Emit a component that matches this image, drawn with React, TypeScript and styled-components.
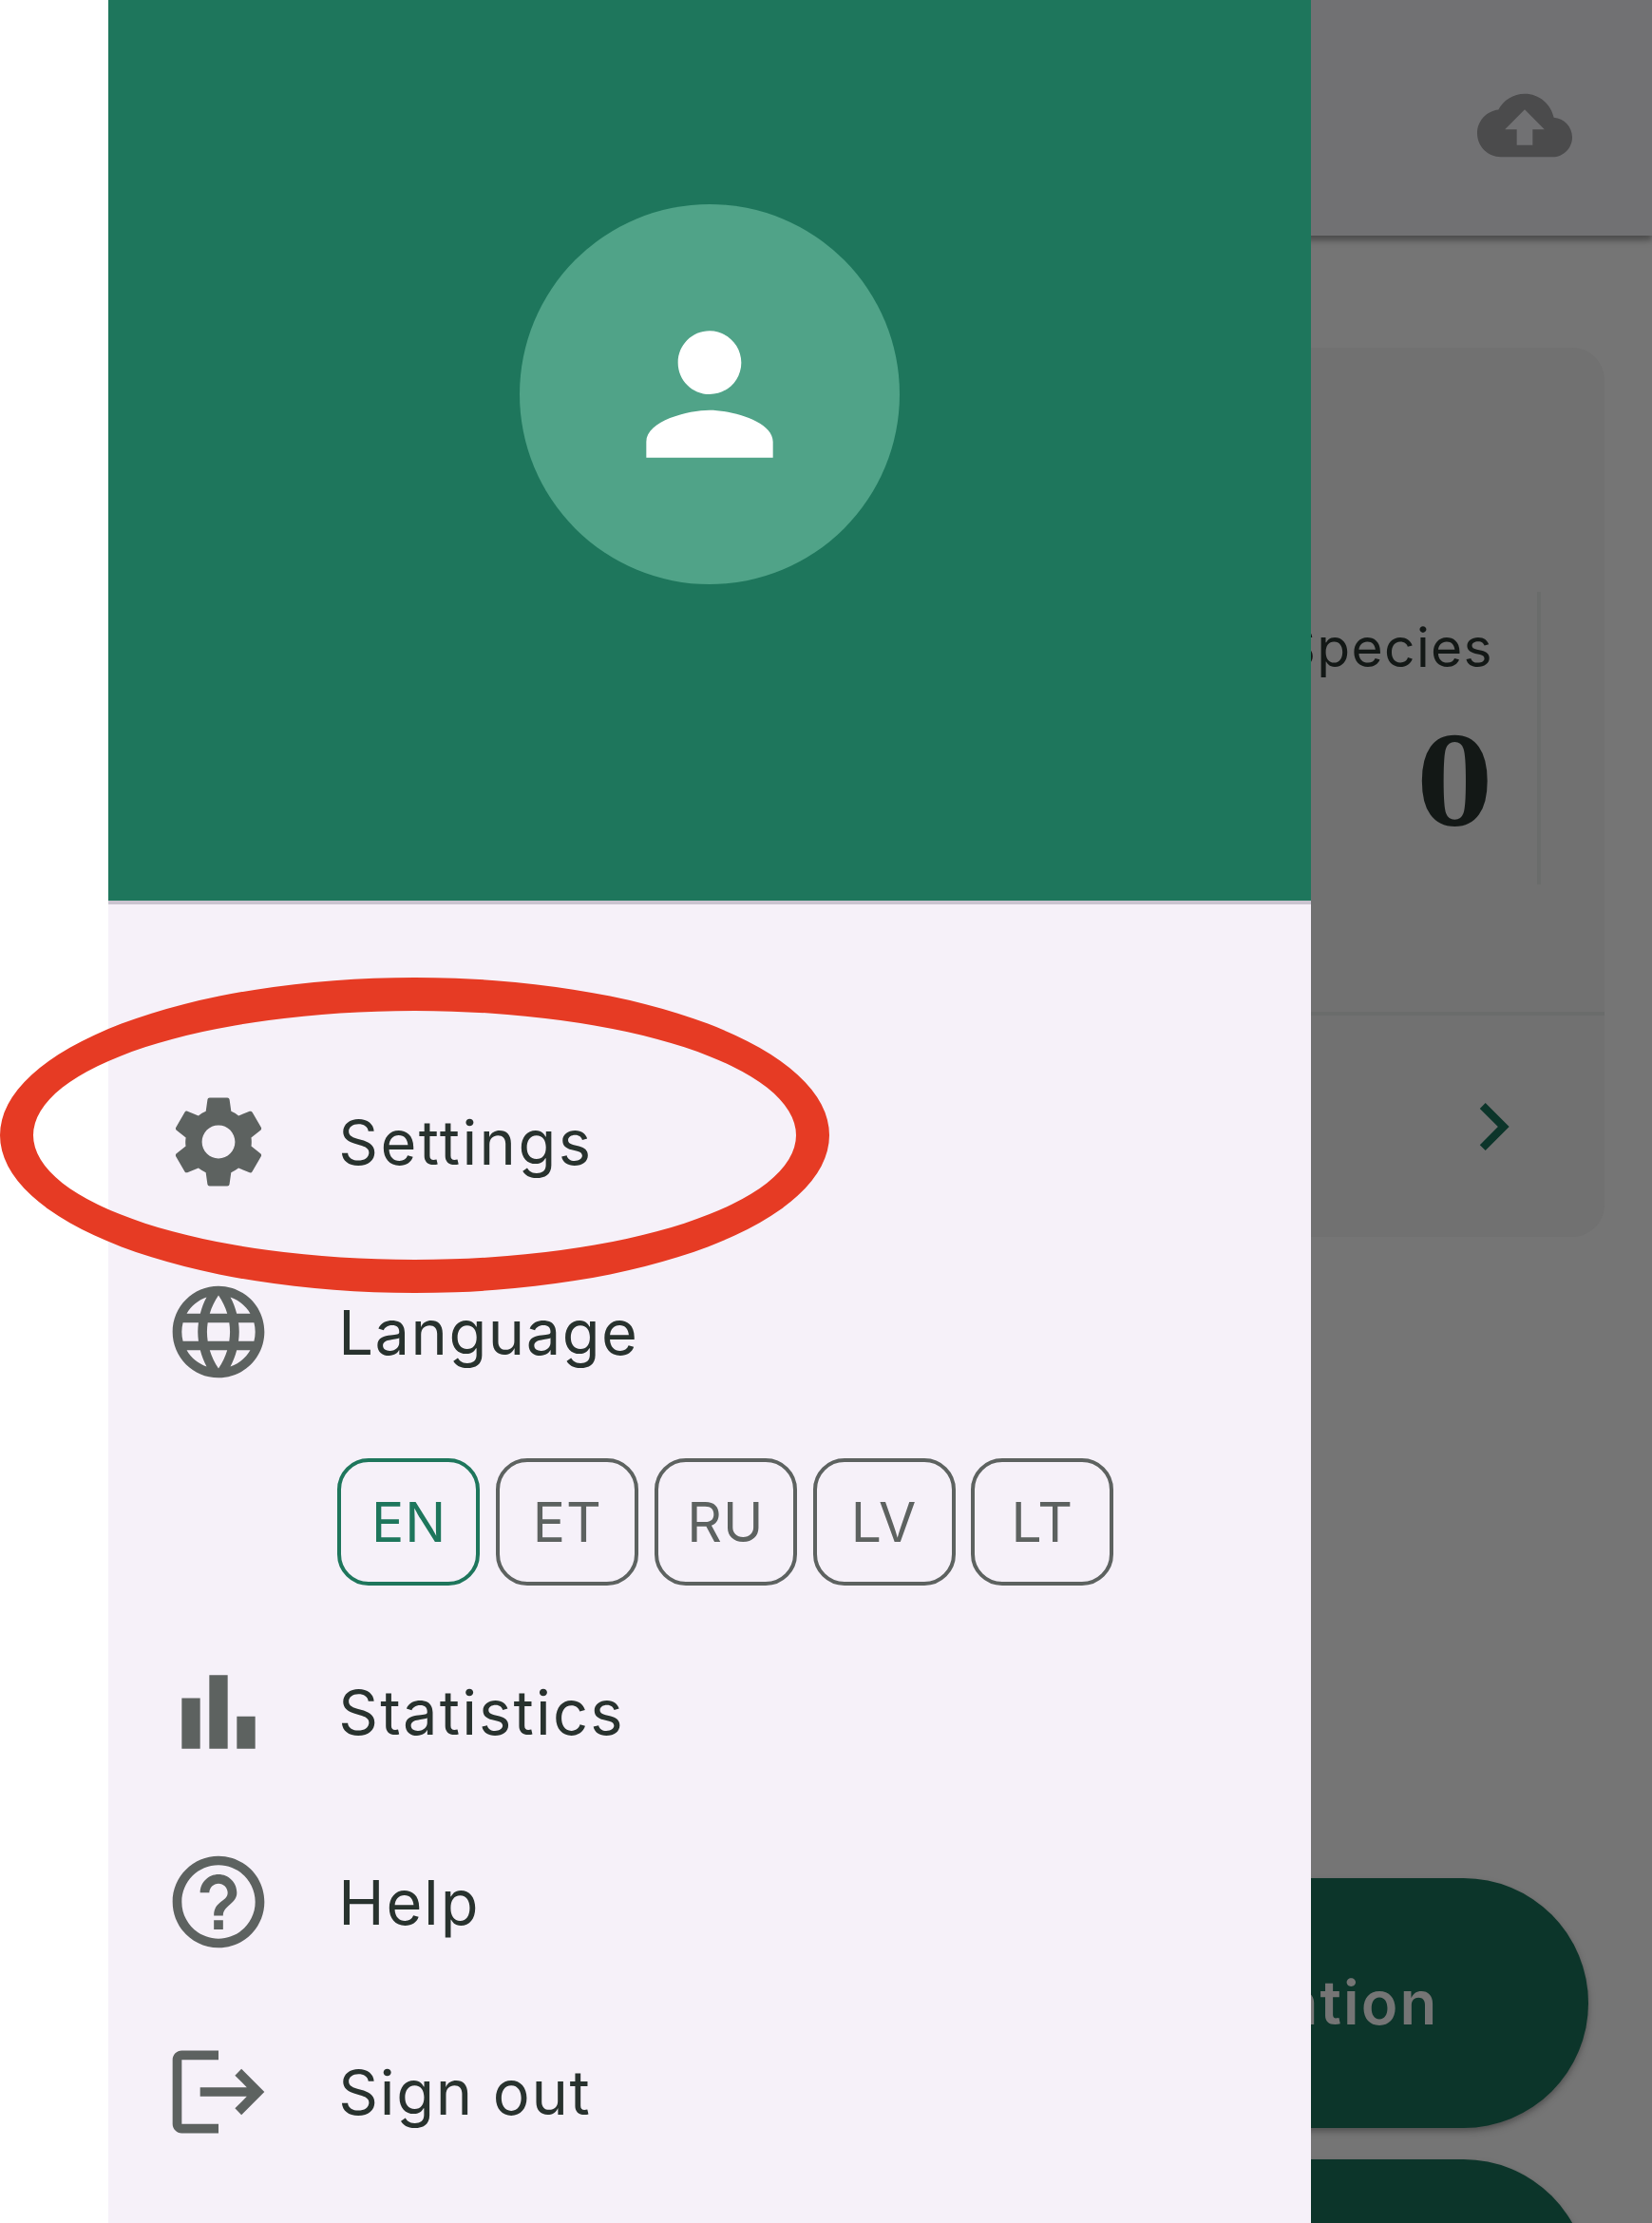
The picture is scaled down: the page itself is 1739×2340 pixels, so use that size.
import React from 'react';
import styled, { createGlobalStyle } from 'styled-components';

const Global = createGlobalStyle`
  * { box-sizing: border-box; }
  body { margin: 0; background: #fff; font-family: Inter, "Open Sans", sans-serif; }
`;

const Screen = styled.div`
  position: relative;
  display: flex;
  width: 1739px;
  height: 2340px;
  overflow: hidden;
  background: #ffffff;
`;

const Drawer = styled.aside`
  width: 1266px;
  margin-left: 114px;
  flex: none;
  display: flex;
  flex-direction: column;
  background: #f6f1f9;
`;

const Profile = styled.div`
  height: 952px;
  padding-top: 215px;
  display: flex;
  justify-content: center;
  align-items: flex-start;
  background: #1e765c;
  border-bottom: 4px solid #cac4d0;
`;

const Avatar = styled.div`
  width: 400px;
  height: 400px;
  border-radius: 50%;
  display: flex;
  align-items: center;
  justify-content: center;
  background: #50a388;
`;

const Menu = styled.nav`
  display: flex;
  flex-direction: column;
  padding: 150px 0 0 58.3px;
`;

const Item = styled.div`
  height: 200px;
  display: flex;
  align-items: center;
  gap: 68px;
  color: #5d6260;
`;

const Label = styled.span<{ $track?: number }>`
  padding-top: 2px;
  font-size: 65px;
  line-height: 80px;
  letter-spacing: ${(p) => p.$track ?? 2}px;
  color: #28322e;
  white-space: nowrap;
`;

const Chips = styled.div`
  height: 200px;
  padding-left: 183.2px;
  display: flex;
  align-items: center;
  gap: 16.7px;
`;

const Chip = styled.button<{ $active?: boolean }>`
  width: 150px;
  height: 134px;
  padding: 2px 0 0 0;
  border: 4px solid ${(p) => (p.$active ? '#1e765c' : '#5d6260')};
  border-radius: 33px;
  background: transparent;
  color: ${(p) => (p.$active ? '#1e765c' : '#5d6260')};
  font: 400 57px/70px Inter, sans-serif;
  letter-spacing: 1px;
`;

const Page = styled.main`
  width: 359px;
  flex: none;
  overflow: hidden;
  display: flex;
  flex-direction: column;
  background: #757575;
`;

const TopBar = styled.header`
  height: 248px;
  flex: none;
  margin-left: -60px;
  padding: 15px 84px 0 0;
  display: flex;
  align-items: center;
  justify-content: flex-end;
  background: #717173;
  color: #4b4b4c;
  box-shadow: 0 5px 5px rgba(0, 0, 0, 0.22), 0 3px 10px rgba(0, 0, 0, 0.2);
`;

const Card = styled.section`
  margin: 118px 50px 0 -60px;
  height: 936px;
  flex: none;
  display: flex;
  flex-direction: column;
  border-radius: 34px;
  background: #717171;
`;

const Stats = styled.div`
  height: 703px;
  padding: 257px 67px 0 0;
  border-bottom: 4px solid #6a6c6b;
`;

const Stat = styled.div`
  height: 308px;
  padding: 24px 46px 0 0;
  display: flex;
  flex-direction: column;
  align-items: flex-end;
  border-right: 4px solid #6a6c6b;
  color: #131816;
`;

const StatName = styled.span`
  font-size: 57px;
  line-height: 70px;
  letter-spacing: 1.3px;
`;

const StatValue = styled.span`
  margin: 42px 1px 0 0;
  font: 700 127px/130px "DejaVu Serif Condensed", "DejaVu Serif", serif;
  font-stretch: condensed;
`;

const CardLink = styled.div`
  flex: 1;
  display: flex;
  align-items: center;
  justify-content: flex-end;
  padding: 0 67.3px 0 0;
  color: #0c352a;
`;

const Actions = styled.div`
  display: flex;
  flex-direction: column;
  gap: 33px;
  margin: 675px 67px 0 -300px;
`;

const Action = styled.button`
  height: 263px;
  flex: none;
  padding: 0 157.5px 2px 0;
  border: 0;
  border-radius: 132px;
  background: #0c352a;
  color: #757575;
  text-align: right;
  font: 560 63.5px/80px Inter, sans-serif;
  letter-spacing: 2.1px;
  box-shadow: 0 4px 8px rgba(0, 0, 0, 0.18), 0 3px 4px rgba(0, 0, 0, 0.14);
`;

const Marker = styled.div`
  position: absolute;
  left: 0;
  top: 1029px;
  width: 873px;
  height: 332px;
  border: 35px solid #e63b24;
  border-radius: 50%;
`;

const Glyph = styled.svg<{ $size: number }>`
  width: ${(p) => p.$size}px;
  height: ${(p) => p.$size}px;
  flex: none;
  display: block;
  fill: currentColor;
`;

const AvatarGlyph = styled(Glyph)`
  color: #ffffff;
`;

const paths = {
  person:
    'M12 12c2.21 0 4-1.79 4-4s-1.79-4-4-4-4 1.79-4 4 1.79 4 4 4zm0 2c-2.67 0-8 1.34-8 4v2h16v-2c0-2.66-5.33-4-8-4z',
  cloud:
    'M19.35 10.04C18.67 6.59 15.64 4 12 4 9.11 4 6.6 5.64 5.35 8.04 2.34 8.36 0 10.91 0 14c0 3.31 2.69 6 6 6h13c2.76 0 5-2.24 5-5 0-2.64-2.05-4.78-4.65-4.96zM14 13v4h-4v-4H7l5-5 5 5h-3z',
  chevron: 'M10 6L8.59 7.41 13.17 12l-4.58 4.59L10 18l6-6z',
  settings:
    'M19.14 12.94c.04-.3.06-.61.06-.94 0-.32-.02-.64-.07-.94l2.03-1.58c.18-.14.23-.41.12-.61l-1.92-3.32c-.12-.22-.37-.29-.59-.22l-2.39.96c-.5-.38-1.03-.7-1.62-.94l-.36-2.54c-.04-.24-.24-.41-.48-.41h-3.84c-.24 0-.43.17-.47.41l-.36 2.54c-.59.24-1.13.57-1.62.94l-2.39-.96c-.22-.08-.47 0-.59.22L2.74 8.87c-.12.21-.08.47.12.61l2.03 1.58c-.05.3-.09.63-.09.94s.02.64.07.94l-2.03 1.58c-.18.14-.23.41-.12.61l1.92 3.32c.12.22.37.29.59.22l2.39-.96c.5.38 1.03.7 1.62.94l.36 2.54c.05.24.24.41.48.41h3.84c.24 0 .44-.17.47-.41l.36-2.54c.59-.24 1.13-.56 1.62-.94l2.39.96c.22.08.47 0 .59-.22l1.92-3.32c.12-.22.07-.47-.12-.61l-2.01-1.58zM12 15.6c-1.98 0-3.6-1.62-3.6-3.6s1.62-3.6 3.6-3.6 3.6 1.62 3.6 3.6-1.62 3.6-3.6 3.6z',
  language:
    'M11.99 2C6.47 2 2 6.48 2 12s4.47 10 9.99 10C17.52 22 22 17.52 22 12S17.52 2 11.99 2zm6.93 6h-2.95c-.32-1.25-.78-2.45-1.38-3.56 1.84.63 3.37 1.91 4.33 3.56zM12 4.04c.83 1.2 1.48 2.53 1.91 3.96h-3.82c.43-1.43 1.08-2.76 1.91-3.96zM4.26 14C4.1 13.36 4 12.69 4 12s.1-1.36.26-2h3.38c-.08.66-.14 1.32-.14 2s.06 1.34.14 2H4.26zm.82 2h2.95c.32 1.25.78 2.45 1.38 3.56-1.84-.63-3.37-1.9-4.33-3.56zm2.95-8H5.08c.96-1.66 2.49-2.93 4.33-3.56C8.81 5.55 8.35 6.75 8.03 8zM12 19.96c-.83-1.2-1.48-2.53-1.91-3.96h3.82c-.43 1.43-1.08 2.76-1.91 3.96zM14.34 14H9.66c-.09-.66-.16-1.32-.16-2s.07-1.35.16-2h4.68c.09.65.16 1.32.16 2s-.07 1.34-.16 2zm.25 5.56c.6-1.11 1.06-2.31 1.38-3.56h2.95c-.96 1.65-2.49 2.93-4.33 3.56zM16.36 14c.08-.66.14-1.32.14-2s-.06-1.34-.14-2h3.38c.16.64.26 1.31.26 2s-.1 1.36-.26 2h-3.38z',
  statistics: 'M4 9h4v11H4zM10 4h4v16h-4zM16 13h4v7h-4z',
  help:
    'M11 18h2v-2h-2v2zm1-16C6.48 2 2 6.48 2 12s4.48 10 10 10 10-4.48 10-10S17.52 2 12 2zm0 18c-4.41 0-8-3.59-8-8s3.59-8 8-8 8 3.59 8 8-3.59 8-8 8zm0-14c-2.21 0-4 1.79-4 4h2c0-1.1.9-2 2-2s2 .9 2 2c0 2-3 1.75-3 5h2c0-2.25 3-2.5 3-5 0-2.21-1.79-4-4-4z',
  signOut:
    'M17 7l-1.41 1.41L18.17 11H8v2h10.17l-2.58 2.58L17 17l5-5zM4 5h8V3H4c-1.1 0-2 .9-2 2v14c0 1.1.9 2 2 2h8v-2H4V5z',
};

type IconName = keyof typeof paths;

const Icon = ({ name, size }: { name: IconName; size: number }) => (
  <Glyph $size={size} viewBox="0 0 24 24">
    <path d={paths[name]} />
  </Glyph>
);

const MenuItem = ({ icon, label, track }: { icon: IconName; label: string; track?: number }) => (
  <Item>
    <Icon name={icon} size={116} />
    <Label $track={track}>{label}</Label>
  </Item>
);

const languages = ['EN', 'ET', 'RU', 'LV', 'LT'];

export default function App() {
  return (
    <Screen>
      <Global />
      <Drawer>
        <Profile>
          <Avatar>
            <AvatarGlyph $size={200} viewBox="0 0 24 24">
              <path d={paths.person} />
            </AvatarGlyph>
          </Avatar>
        </Profile>
        <Menu>
          <MenuItem icon="settings" label="Settings" track={2.4} />
          <MenuItem icon="language" label="Language" track={1.5} />
          <Chips>
            {languages.map((code) => (
              <Chip key={code} $active={code === 'EN'}>
                {code}
              </Chip>
            ))}
          </Chips>
          <MenuItem icon="statistics" label="Statistics" track={2.2} />
          <MenuItem icon="help" label="Help" track={1.8} />
          <MenuItem icon="signOut" label="Sign out" track={1.7} />
        </Menu>
      </Drawer>
      <Page>
        <TopBar>
          <Icon name="cloud" size={100} />
        </TopBar>
        <Card>
          <Stats>
            <Stat>
              <StatName>Species</StatName>
              <StatValue>0</StatValue>
            </Stat>
          </Stats>
          <CardLink>
            <Icon name="chevron" size={100} />
          </CardLink>
        </Card>
        <Actions>
          <Action>observation</Action>
          <Action />
        </Actions>
      </Page>
      <Marker />
    </Screen>
  );
}
